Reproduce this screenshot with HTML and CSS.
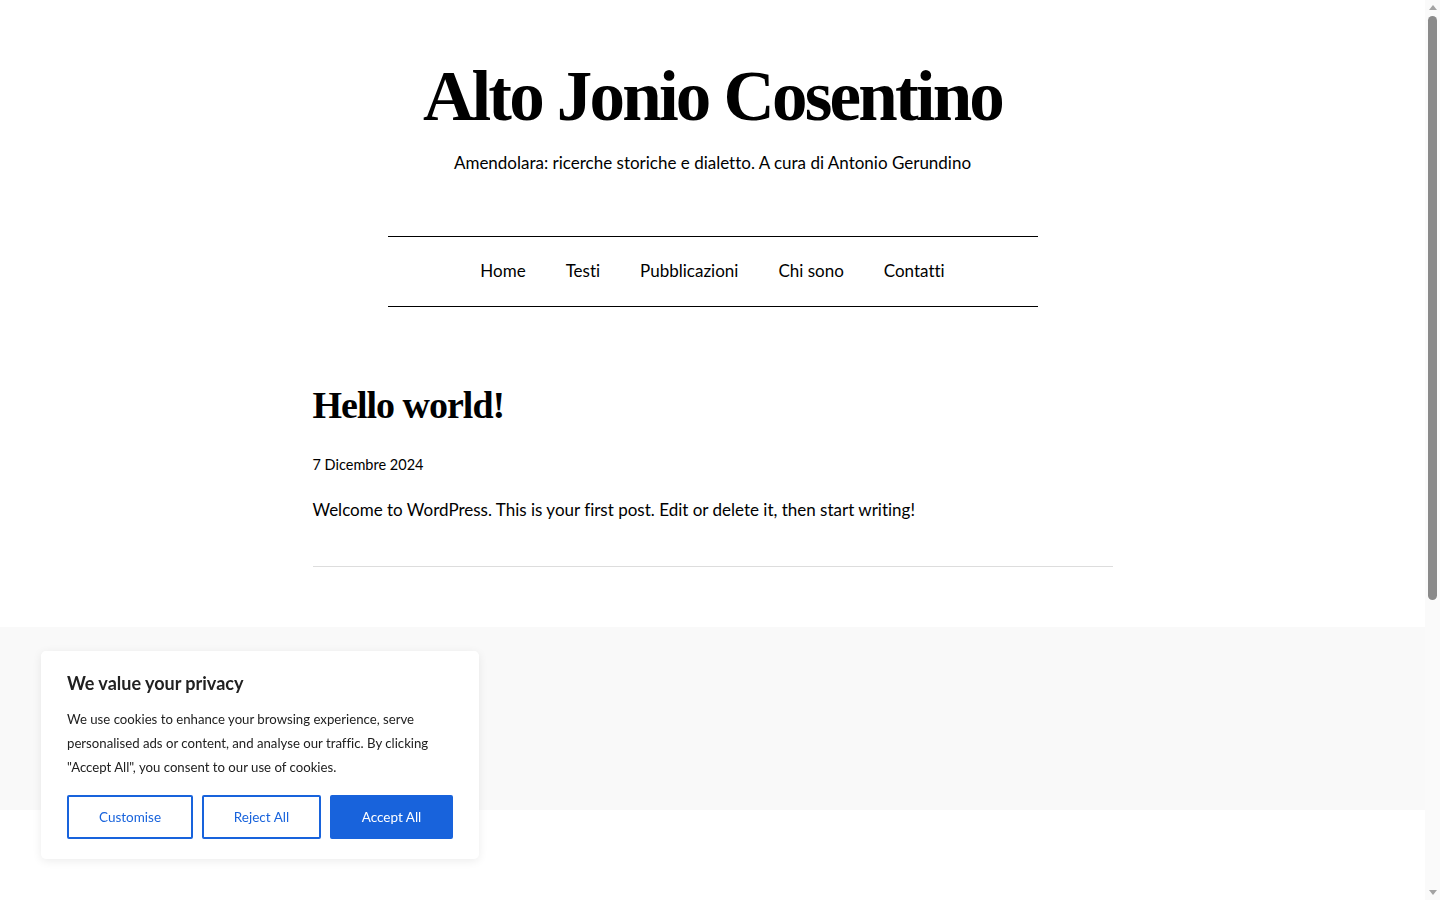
FILE: index.html
```html
<!DOCTYPE html>
<html lang="it">
<head>
<meta charset="utf-8">
<title>Alto Jonio Cosentino</title>
<link rel="stylesheet" href="styles.css">
</head>
<body>
<div class="page">
  <header class="site-header">
    <h1 class="site-title">Alto Jonio Cosentino</h1>
    <p class="site-tagline">Amendolara: ricerche storiche e dialetto. A cura di Antonio Gerundino</p>
    <nav class="site-nav">
      <ul class="nav-list">
        <li><a href="#">Home</a></li>
        <li><a href="#">Testi</a></li>
        <li><a href="#">Pubblicazioni</a></li>
        <li><a href="#">Chi sono</a></li>
        <li><a href="#">Contatti</a></li>
      </ul>
    </nav>
  </header>

  <main class="site-main">
    <article class="post">
      <h2 class="post-title">Hello world!</h2>
      <div class="post-date">7 Dicembre 2024</div>
      <p class="post-content">Welcome to WordPress. This is your first post. Edit or delete it, then start writing!</p>
    </article>
  </main>

  <footer class="site-footer"></footer>
  <div class="site-bottom"></div>
</div>

<div class="scroll-rail" aria-hidden="true">
  <span class="rail-arrow rail-up"></span>
  <span class="rail-thumb"></span>
  <span class="rail-arrow rail-down"></span>
</div>

<div class="cookie-banner">
  <h3 class="cookie-title">We value your privacy</h3>
  <p class="cookie-text">We use cookies to enhance your browsing experience, serve personalised ads or content, and analyse our traffic. By clicking "Accept All", you consent to our use of cookies.</p>
  <div class="cookie-actions">
    <button class="btn btn-outline btn-customise">Customise</button>
    <button class="btn btn-outline btn-reject">Reject All</button>
    <button class="btn btn-solid btn-accept">Accept All</button>
  </div>
</div>
</body>
</html>
```
FILE: styles.css
```css
html, body {
  margin: 0;
  padding: 0;
}

body {
  background: #fff;
  color: #000;
  font-family: Lato, "Noto Sans", sans-serif;
  font-variant-ligatures: none;
}

.page {
  margin-right: 15px;
}

.site-header {
  display: flex;
  flex-direction: column;
  align-items: center;
  padding-top: 58px;
}

.site-title {
  margin: 0;
  font-family: "Liberation Serif", serif;
  font-weight: 700;
  font-size: 71px;
  line-height: 76px;
  letter-spacing: -2.8px;
}

.site-tagline {
  margin: 17px 0 0;
  font-size: 17px;
  line-height: 24px;
}

.site-nav {
  width: 650px;
  margin-top: 61px;
  border-top: 1px solid #000;
  border-bottom: 1px solid #000;
}

.nav-list {
  list-style: none;
  margin: 0;
  padding: 0;
  height: 69px;
  display: flex;
  justify-content: center;
  align-items: center;
  gap: 40px;
}

.nav-list a {
  color: #000;
  text-decoration: none;
  font-size: 17px;
  position: relative;
  top: -1px;
}

.site-main {
  display: flex;
  justify-content: center;
  padding-top: 74px;
  padding-bottom: 60px;
}

.post {
  width: 800px;
  border-bottom: 1px solid #ddd;
  padding-bottom: 43px;
}

.post-title {
  margin: 0;
  font-family: "Liberation Serif", serif;
  font-weight: 700;
  font-size: 38px;
  line-height: 48px;
  letter-spacing: -1px;
}

.post-date {
  margin-top: 26px;
  font-size: 14.5px;
  line-height: 20px;
}

.post-content {
  margin: 22px 0 0;
  font-size: 17px;
  line-height: 26px;
}

.site-footer {
  height: 183px;
  background: #f9f9f9;
}

.site-bottom {
  height: 510px;
}

/* vertical scroll rail along the right edge */
.scroll-rail {
  position: fixed;
  top: 0;
  right: 0;
  width: 15px;
  height: 100%;
  background: #fafafa;
  display: flex;
  flex-direction: column;
  align-items: center;
}

.rail-arrow {
  width: 0;
  height: 0;
  border-left: 4px solid transparent;
  border-right: 4px solid transparent;
}

.rail-up {
  margin-top: 5px;
  border-bottom: 5px solid #a3a3a3;
}

.rail-down {
  margin-top: auto;
  margin-bottom: 5px;
  border-top: 5px solid #a3a3a3;
}

.rail-thumb {
  width: 9px;
  height: 584px;
  margin-top: 6px;
  border-radius: 5px;
  background: #8a8a8a;
}

/* cookie consent */
.cookie-banner {
  position: fixed;
  left: 41px;
  bottom: 41px;
  width: 438px;
  box-sizing: border-box;
  padding: 20px 26px 20px;
  background: #fff;
  border-radius: 5px;
  box-shadow: 0 2px 10px rgba(0, 0, 0, 0.08);
  color: #212121;
}

.cookie-title {
  margin: 0;
  font-size: 18px;
  line-height: 24px;
  font-weight: 700;
}

.cookie-text {
  margin: 12px 0 0;
  font-size: 13.2px;
  line-height: 24px;
}

.cookie-actions {
  display: flex;
  gap: 9px;
  margin-top: 16px;
}

.btn {
  height: 44px;
  box-sizing: border-box;
  border: 2px solid #1863dc;
  border-radius: 2px;
  font-family: inherit;
  font-size: 13.5px;
  font-variant-ligatures: none;
  cursor: pointer;
}

.btn-outline {
  background: #fff;
  color: #1863dc;
}

.btn-solid {
  background: #1863dc;
  color: #fff;
}

.btn-customise { width: 126px; }
.btn-reject { width: 119px; }
.btn-accept { width: 123px; }
```
